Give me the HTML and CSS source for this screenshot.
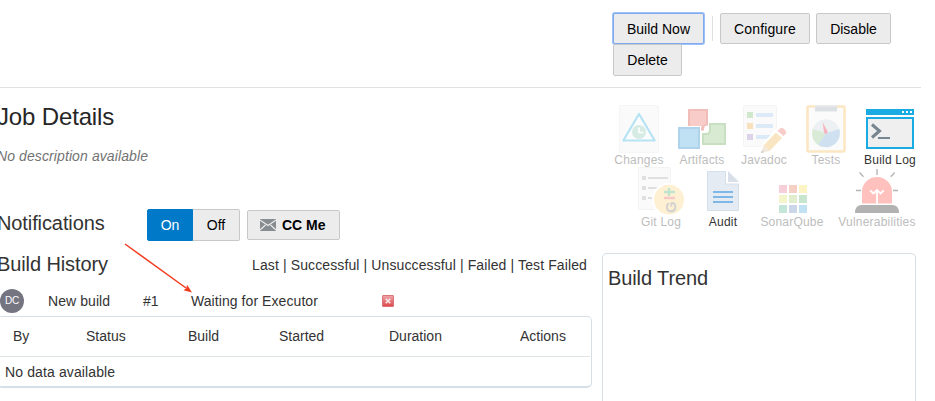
FILE: index.html
```html
<!DOCTYPE html>
<html lang="en">
<head>
<meta charset="utf-8">
<title>Job Details</title>
<link rel="stylesheet" href="styles.css">
</head>
<body>
<header class="toolbar">
  <div class="actions">
    <button class="btn btn-focus">Build Now</button>
    <span class="divider"></span>
    <button class="btn configure">Configure</button>
    <button class="btn disable">Disable</button>
    <button class="btn delete">Delete</button>
  </div>
</header>
<main class="page">
  <section class="details">
    <h1>Job Details</h1>
    <p class="description">No description available</p>
    <div class="notifications">
      <h2>Notifications</h2>
      <div class="toggle"><button class="on">On</button><button class="off">Off</button></div>
      <button class="cc">
        <svg width="16" height="12" viewBox="0 0 16 12"><path fill="#878c91" d="M0 0h16v12H0z"/><path d="M0 1l8 5.500L16 1M0 11l5.500-5M16 11l-5.500-5" fill="none" stroke="#ececec" stroke-width="1.100"/></svg>
        <span>CC Me</span>
      </button>
    </div>
    <div class="history-head">
      <h2>Build History</h2>
      <nav>Last | Successful | Unsuccessful | Failed | Test Failed</nav>
    </div>
    <div class="queue">
      <span class="avatar">DC</span>
      <span class="q-name">New build</span>
      <span class="q-num">#1</span>
      <span class="q-state">Waiting for Executor</span>
      <svg width="12" height="12" viewBox="0 0 12 12"><defs><linearGradient id="rg" x2="0" y2="1"><stop offset="0" stop-color="#f0a6a8"/><stop offset=".5" stop-color="#e4787b"/><stop offset="1" stop-color="#df4548"/></linearGradient></defs><rect x=".5" y=".5" width="11" height="11" rx=".6" fill="url(#rg)" stroke="#db7476"/><path d="M3.700 3.700l4.600 4.600M8.300 3.700L3.700 8.300" stroke="#fbeaea" stroke-width="1.500"/></svg>
    </div>
    <div class="table">
      <div class="thead"><span>By</span><span>Status</span><span>Build</span><span>Started</span><span>Duration</span><span>Actions</span></div>
      <div class="empty">No data available</div>
    </div>
  </section>
  <aside class="side">
    <div class="links">
      <a class="link off-link"><svg viewBox="0 0 48 48"><rect x="4.5" y=".5" width="39" height="47" rx="1" fill="#fafafa" stroke="#f5f5f5"/><path d="M24 9L8.300 35.500h31.400z" fill="#fafcfd" stroke="#b5e3f4" stroke-width="2.200" stroke-linejoin="round"/><circle cx="24" cy="27" r="7" fill="#d5ebe3"/><path d="M24 22.500V27.500h4.500" fill="none" stroke="#fff" stroke-width="1.600"/></svg><span>Changes</span></a>
      <a class="link off-link w63"><svg viewBox="0 0 48 48"><path d="M11 5h18v14.500q-4 0-4 5H11z" fill="#f8cdc9" stroke="#f0bdb9" stroke-width="2"/><path d="M32 19h15v20H25V29h3q4 0 4-4z" fill="#d9ead2" stroke="#c9dfc1" stroke-width="2"/><path d="M-1 21h24v24H-1z" fill="#fff"/><path d="M1 23h20v20H1z" fill="#c0e0f4" stroke="#aed3ea" stroke-width="2"/></svg><span>Artifacts</span></a>
      <a class="link off-link"><svg viewBox="0 0 48 48"><rect x="3.500" y=".5" width="33" height="41" rx="1" fill="#fafafa" stroke="#f4f4f4"/><path d="M7 7h6v6H7z" fill="#cfe7cb"/><path d="M7 18h6v6H7z" fill="#fae1bd"/><path d="M7 29h6v6H7z" fill="#ddd3e8"/><path d="M16 8h17v4H16zM16 19h17v4H16zM16 30h17v4H16z" fill="#dbeaf6"/><path d="M20 49l3-11L40 20l9 8-18 18z" fill="#fff"/><path d="M23.500 40.500l12.500-13 6 5.500-12.500 13z" fill="#fae5c2"/><path d="M23.500 40.500l6 5.500L21 48z" fill="#f1e8de"/><path d="M22 45.500L24 47.200 21 48z" fill="#c9c9c9"/><path d="M37.500 26l2.500-2.500q2-1.500 4 .5l1.500 1.500q1.500 2 0 3.500L43.500 31z" fill="#f8cdc9"/></svg><span>Javadoc</span></a>
      <a class="link off-link"><svg viewBox="0 0 48 48"><rect x="5.500" y="1.500" width="37" height="45" rx="1" fill="#fbfbfb" stroke="#fce7c3" stroke-width="2.600"/><path d="M13 0h22v6.500H13z" fill="#dce0e5"/><path d="M13 0h22v2H13z" fill="#e7e8e8"/><circle cx="24" cy="28.300" r="14" fill="#edf1f4"/><path d="M24 28.300L10.700 24A14 14 0 0 0 21 42z" fill="#d9ead6"/><path d="M24 28.300L37.300 24A14 14 0 0 1 16 39.700z" fill="#cfe1f1"/><path d="M20.700 17.500l5 9a2 2 0 0 1-3.700 1.300z" fill="#f6b5be"/></svg><span>Tests</span></a>
      <a class="link w64"><svg viewBox="0 0 48 48"><path d="M0 4h48v6H0z" fill="#1aabe3"/><path d="M36 6h2v2h-2zM40 6h2v2h-2zM44 6h2v2h-2z" fill="#fff"/><path d="M1 13h46v30H1z" fill="#efefef" stroke="#1aabe3" stroke-width="2"/><path d="M6 19.500l7.500 6.500L6 32.500" fill="none" stroke="#778591" stroke-width="3"/><path d="M12 33h12" stroke="#778591" stroke-width="2"/></svg><span>Build Log</span></a>
    </div>
    <div class="links second">
      <a class="link off-link"><svg viewBox="0 0 48 48"><rect x="1.500" y=".5" width="32" height="42" rx="1" fill="#fafafa" stroke="#f3f3f3"/><path d="M5 9h4v4H5zM5 19h4v4H5zM5 29h4v4H5zM11 10h20v2H11zM11 20h9v2h-9zM11 30h5v2h-5z" fill="#dddfe1"/><circle cx="32" cy="32.700" r="17" fill="#fff"/><circle cx="32" cy="32.700" r="15" fill="#fdf0d3"/><text class="git-g" transform="translate(38.500 46) rotate(-90)">G</text><path d="M27 31h11" stroke="#f8c8c6" stroke-width="2.400"/><path d="M27 25h11M32 21v8" stroke="#bfe3cd" stroke-width="2.400"/></svg><span>Git Log</span></a>
      <a class="link"><svg viewBox="0 0 48 48"><path d="M9 4.500h17.500V17h13v26.500h-31V4.500z" fill="#e4ebf3" stroke="#d5dfe9" stroke-linejoin="round"/><path d="M29 4l11 11H29z" fill="#d8dfe9"/><path d="M14 25h20M14 30h20M14 35h20" stroke="#7fb8e6" stroke-width="2"/></svg><span>Audit</span></a>
      <a class="link off-link w76"><svg viewBox="0 0 48 48"><path d="M11 18h8v8h-8z" fill="#f7cfd8"/><path d="M21 18h8v8h-8z" fill="#f6cfc5"/><path d="M31 18h8v8h-8z" fill="#fdf4c5"/><path d="M11 28h8v8h-8z" fill="#f5f5cb"/><path d="M21 28h8v8h-8z" fill="#e0edce"/><path d="M31 28h8v8h-8z" fill="#c7e5cf"/><path d="M11 38h8v8h-8z" fill="#c4e6d9"/><path d="M21 38h8v8h-8z" fill="#cbd6e9"/><path d="M31 38h8v8h-8z" fill="#c0e2f4"/></svg><span>SonarQube</span></a>
      <a class="link off-link w94"><svg viewBox="0 0 48 48"><path d="M9 36.500V24.500a15 14.500 0 0 1 30 0v12z" fill="#fec1be"/><path d="M2 46q0-8 7-8h30q7 0 7 8z" fill="#b2b2b2"/><path d="M24 2v6M6.500 5.500l4 4.200M41.700 5.500l-4 4.200M3 23.500h5M40 23.500h5" stroke="#b2b2b2" stroke-width="1.300"/><path d="M17.300 23.500l3.200 3 3.500-3.500 3.500 3.500 3.200-3M24 23v13.500" fill="none" stroke="#fff" stroke-width="1.800"/></svg><span>Vulnerabilities</span></a>
    </div>
    <div class="trend"><h2>Build Trend</h2></div>
  </aside>
</main>
<svg class="pointer" width="70" height="52" viewBox="0 0 70 52"><path d="M1 1L62 45" stroke="#f23a1c" stroke-width="1.500"/><path d="M68 49.500l-8.500-2.300 2.800-2 .8-3.400z" fill="#f23a1c"/></svg>
</body>
</html>
```
FILE: styles.css
```css
* { box-sizing: border-box; }
body {
  margin: 0;
  width: 935px;
  height: 401px;
  overflow: hidden;
  background: #fff;
  color: #333;
  font: 14px/20px "Liberation Sans", Arial, sans-serif;
}
h1, h2, p { margin: 0; font-weight: 400; }
h1 { font-size: 24px; line-height: 30px; letter-spacing: -.15px; color: #262626; }
h2 { font-size: 20px; line-height: 26px; letter-spacing: -.1px; color: #333; }
svg { display: block; flex: none; overflow: visible; }
button {
  padding: 0;
  font: inherit;
  color: #000;
  background: #ececec;
  border: 1px solid #c8c8c8;
  border-radius: 2px;
}
.toolbar {
  width: 921px;
  height: 88px;
  padding: 13px 0 0 613px;
  border-bottom: 1px solid #e1e1e1;
}
.actions { display: flex; flex-wrap: wrap; width: 290px; }
.btn { height: 31px; }
.btn-focus { width: 91px; border-color: #7eaaf0; box-shadow: 0 0 0 1px #9dc0f7; }
.divider { width: 1px; height: 25px; margin: 3px 7px 0 8px; background: #dfdfdf; }
.configure { width: 90px; letter-spacing: .12px; }
.disable { width: 75px; margin-left: 6px; }
.delete { width: 69px; height: 32px; padding-bottom: 1px; }
.page { display: flex; gap: 10px; }
.details { width: 595px; margin-left: -3px; padding-top: 14px; flex: none; }
.description { margin-top: 14px; font-style: italic; letter-spacing: .1px; color: #737373; }
.notifications { display: flex; align-items: center; height: 32px; margin-top: 43px; }
.notifications h2 { width: 150px; margin-top: -4px; }
.toggle { display: flex; height: 32px; }
.on { width: 46px; color: #fff; background: #0079c8; border-color: #0079c8; border-radius: 2px 0 0 2px; }
.off { width: 47px; border-left: 0; border-radius: 0 2px 2px 0; }
.cc {
  display: flex;
  align-items: center;
  gap: 6px;
  width: 93px;
  height: 30px;
  margin-left: 7px;
  padding-left: 12px;
  font-weight: 700;
}
.history-head { display: flex; justify-content: space-between; align-items: center; margin-top: 10px; padding-right: 5px; }
.history-head nav { padding-top: 1px; letter-spacing: .115px; }
.queue { display: flex; align-items: center; height: 24px; margin-top: 12px; padding-left: 3px; letter-spacing: .07px; }
.avatar {
  width: 24px;
  height: 24px;
  border-radius: 50%;
  background: #757582;
  color: #fff;
  font-size: 10px;
  line-height: 23px;
  letter-spacing: -.2px;
  text-align: center;
}
.q-name { width: 95px; margin-left: 24px; }
.q-num { width: 48px; }
.q-state { width: 191px; }
.table {
  height: 72px;
  margin-top: 3px;
  border: 1px solid #d6dfe6;
  border-bottom-width: 2px;
  border-radius: 5px;
}
.thead {
  display: grid;
  grid-template-columns: 73px 102px 91px 110px 131px 1fr;
  height: 40px;
  margin-right: 1px;
  padding: 9px 0 0 15px;
  border-bottom: 1px solid #dfe4e7;
}
.empty { padding: 5px 0 0 7px; letter-spacing: .12px; }
.side { width: 322px; padding-top: 17px; flex: none; }
.links { display: flex; height: 62px; margin-left: 6px; }
.second { margin-left: 28px; }
.link { display: flex; flex-direction: column; align-items: center; width: 62px; flex: none; color: #333; }
.link svg { width: 48px; height: 48px; }
.link span { font-size: 12px; line-height: 14px; letter-spacing: .2px; }
.off-link { color: #bdbdbd; }
.w63 { width: 64px; margin: 0 -1px 0 0; }
.w64 { width: 64px; margin-left: 1px; }
.w76 { width: 76px; }
.w94 { width: 94px; }
.git-g { font: 700 15px "Liberation Sans", Arial, sans-serif; fill: #d2d1ce; }
.trend {
  width: 314px;
  height: 148px;
  margin-top: 24px;
  padding: 11px 5px;
  border: 1px solid #d6dfe6;
  border-bottom: 0;
  border-radius: 5px 5px 0 0;
}
.pointer { position: absolute; left: 124px; top: 243px; }
```
